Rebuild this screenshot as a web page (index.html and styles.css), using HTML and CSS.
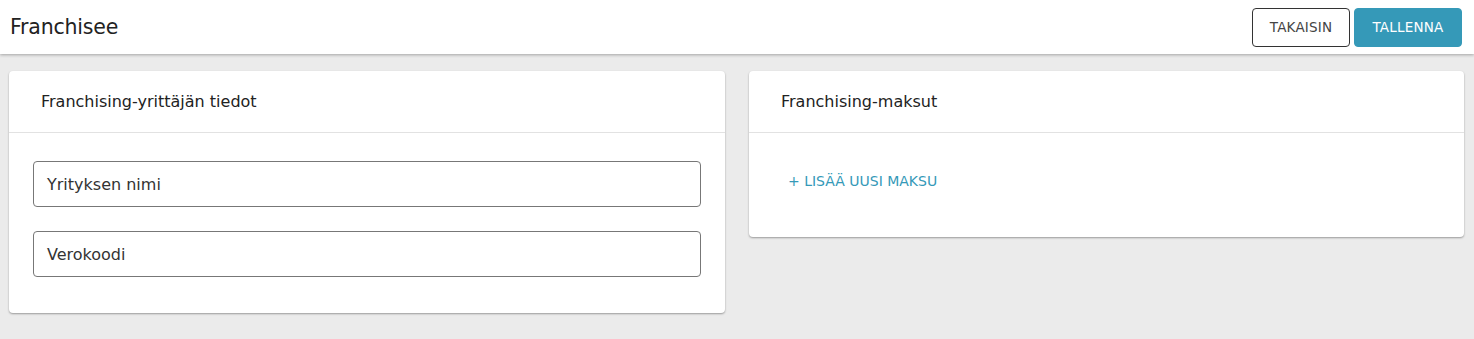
FILE: index.html
```html
<!DOCTYPE html>
<html lang="fi">
<head>
<meta charset="utf-8">
<title>Franchisee</title>
<link rel="stylesheet" href="styles.css">
</head>
<body>
<header class="topbar">
  <h1 class="page-title">Franchisee</h1>
  <div class="actions">
    <button class="btn btn-outline" type="button">TAKAISIN</button>
    <button class="btn btn-primary" type="button">TALLENNA</button>
  </div>
</header>
<main class="content">
  <section class="card">
    <div class="card-header">Franchising-yrittäjän tiedot</div>
    <div class="card-body fields">
      <div class="field">Yrityksen nimi</div>
      <div class="field">Verokoodi</div>
    </div>
  </section>
  <section class="card">
    <div class="card-header">Franchising-maksut</div>
    <div class="card-body">
      <button class="link-btn" type="button">+ LISÄÄ UUSI MAKSU</button>
    </div>
  </section>
</main>
</body>
</html>
```
FILE: styles.css
```css
* { box-sizing: border-box; }
html, body { margin: 0; }
body {
  background: #ebebeb;
  font-family: "DejaVu Sans", "Noto Sans", sans-serif;
  color: #222;
  height: 339px;
  overflow: hidden;
}
.topbar {
  height: 54px;
  background: #fff;
  display: flex;
  align-items: center;
  justify-content: space-between;
  padding: 0 12px 0 10px;
  box-shadow: 0 1px 3px rgba(0,0,0,0.3);
  position: relative;
}
.page-title {
  margin: 0;
  font-size: 20.5px;
  font-weight: 500;
  color: #222;
  letter-spacing: -0.2px;
}
.actions { display: flex; gap: 4px; }
.btn {
  height: 39px;
  border-radius: 4px;
  font-family: inherit;
  font-size: 13.5px;
  letter-spacing: 0.2px;
  cursor: pointer;
}
.btn-outline {
  width: 98px;
  background: #fff;
  border: 1px solid #333;
  color: #444;
}
.btn-primary {
  width: 108px;
  background: #3599b8;
  border: 1px solid #3599b8;
  color: #fff;
}
.content {
  display: grid;
  grid-template-columns: 716px 715px;
  gap: 24px;
  align-items: start;
  padding: 17px 10px 0 9px;
}
.card {
  background: #fff;
  border-radius: 4px;
  box-shadow: 0 1px 2px rgba(0,0,0,0.35);
}
.card-header {
  height: 62px;
  display: flex;
  align-items: center;
  padding-left: 32px;
  font-size: 16px;
  font-weight: 500;
  color: #222;
  border-bottom: 1px solid #e2e2e2;
}
.card-body { padding: 28px 24px 36px; }
.fields { display: flex; flex-direction: column; gap: 24px; }
.field {
  height: 46px;
  border: 1px solid #777;
  border-radius: 4px;
  display: flex;
  align-items: center;
  padding-left: 13px;
  font-size: 16px;
  color: #333;
}
.link-btn {
  height: 40px;
  background: none;
  border: none;
  padding: 0 15px;
  font-family: inherit;
  font-size: 14px;
  font-weight: 500;
  color: #3599b8;
  cursor: pointer;
}
```
